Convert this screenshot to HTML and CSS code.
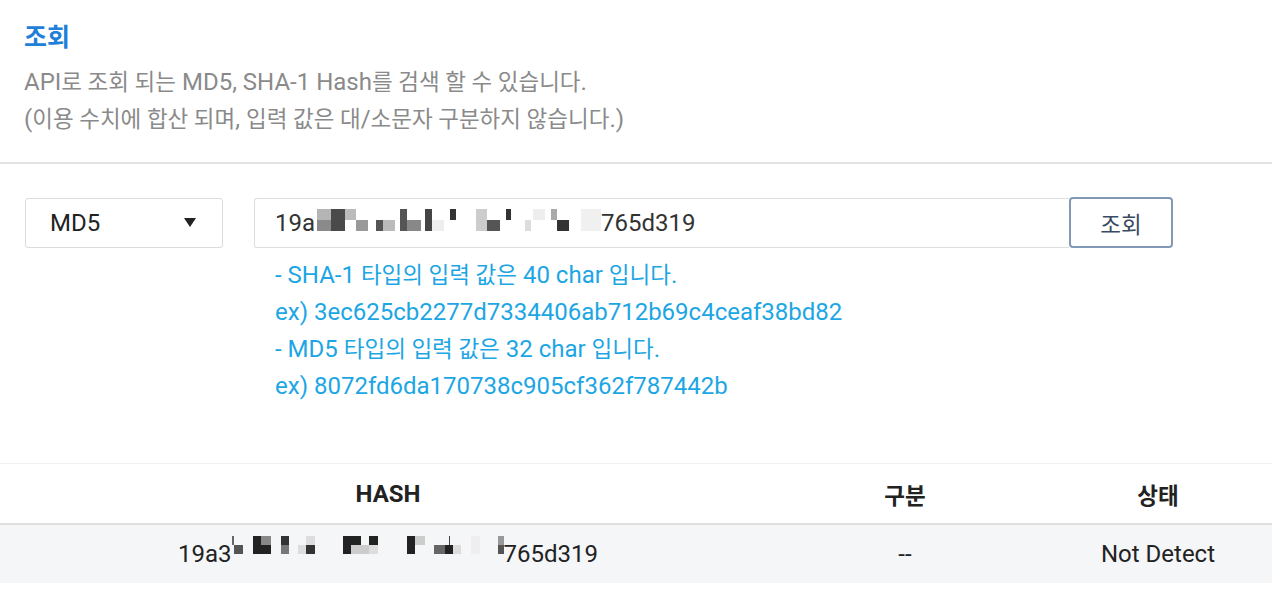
FILE: index.html
```html
<!DOCTYPE html>
<html lang="ko">
<head>
<meta charset="utf-8">
<title>조회</title>
<link rel="stylesheet" href="styles.css">
</head>
<body>
<section class="head">
  <h1 class="title">조회</h1>
  <p class="desc">API<span class="ko">로 조회 되는</span> MD5, SHA-1 Hash<span class="ko">를 검색 할 수 있습니다</span>.<br>(<span class="ko">이용 수치에 합산 되며</span>, <span class="ko">입력 값은 대</span>/<span class="ko">소문자 구분하지 않습니다</span>.)</p>
</section>

<section class="search">
  <div class="row">
    <div class="select"><span>MD5</span><span class="caret"></span></div>
    <div class="input">19a<span class="redact redact-in"></span>765d319</div>
    <button class="btn" type="button">조회</button>
  </div>
  <div class="hints">
    <div>- SHA-1 <span class="ko">타입의 입력 값은</span> 40 char <span class="ko">입니다</span>.</div>
    <div>ex) 3ec625cb2277d7334406ab712b69c4ceaf38bd82</div>
    <div>- MD5 <span class="ko">타입의 입력 값은</span> 32 char <span class="ko">입니다</span>.</div>
    <div>ex) 8072fd6da170738c905cf362f787442b</div>
  </div>
</section>

<section class="table">
  <div class="tr th">
    <div class="c1">HASH</div>
    <div class="c2 ko">구분</div>
    <div class="c3 ko">상태</div>
  </div>
  <div class="tr td">
    <div class="c1">19a3<span class="redact redact-tb"></span>765d319</div>
    <div class="c2">--</div>
    <div class="c3">Not Detect</div>
  </div>
</section>
</body>
</html>
```

FILE: styles.css
```css
* { box-sizing: border-box; }
html, body { margin: 0; padding: 0; background: #fff; }
body {
  font-family: Roboto, "Noto Sans CJK KR", sans-serif;
  color: #222;
  width: 1272px;
  overflow: hidden;
}
.ko { font-size: 22.5px; }

.head {
  padding: 22px 24px 24px;
  border-bottom: 2px solid #e3e3e3;
}
.title {
  margin: 0;
  font-size: 25px;
  line-height: 32px;
  font-weight: 700;
  color: #1f80d8;
}
.desc {
  margin: 10px 0 0;
  font-size: 24px;
  line-height: 37px;
  color: #8a8a8a;
}

.search { padding: 33px 0 0 25px; }
.row { display: flex; align-items: center; }
.select {
  width: 198px;
  height: 50px;
  border: 1px solid #dcdcdc;
  border-radius: 3px;
  display: flex;
  align-items: center;
  justify-content: space-between;
  padding: 0 26px 0 24px;
  font-size: 24px;
  color: #222;
}
.caret {
  width: 0; height: 0;
  border-left: 6.5px solid transparent;
  border-right: 6.5px solid transparent;
  border-top: 9px solid #222;
}
.input {
  margin-left: 31px;
  width: 815px;
  height: 50px;
  border: 1px solid #dedede;
  border-right: none;
  border-radius: 3px 0 0 3px;
  display: flex;
  align-items: center;
  padding-left: 20px;
  font-size: 24px;
  color: #333;
}
.btn {
  width: 104px;
  height: 51px;
  border: 2px solid #8299b6;
  border-radius: 4px;
  background: #fff;
  font-family: "Noto Sans CJK KR", sans-serif;
  font-size: 22.5px;
  color: #3a4a63;
  padding: 0;
}
.hints {
  margin-top: 9px;
  padding-left: 250px;
  font-size: 24px;
  line-height: 37px;
  color: #1ca6e4;
}

.redact { display: inline-block; background-repeat: no-repeat; }
.redact-in {
  width: 286px;
  height: 22px;
  margin-top: -6px;
  background:
    linear-gradient(#b5b5b5,#b5b5b5) 2px 0 / 14px 11px no-repeat,
    linear-gradient(#8a8a8a,#8a8a8a) 2px 11px / 14px 11px no-repeat,
    linear-gradient(#4a4a4a,#4a4a4a) 16px 0 / 14px 22px no-repeat,
    linear-gradient(#bbbbbb,#bbbbbb) 30px 0 / 11px 11px no-repeat,
    linear-gradient(#999999,#999999) 41px 11px / 12px 11px no-repeat,
    linear-gradient(#555555,#555555) 61px 11px / 7px 11px no-repeat,
    linear-gradient(#bbbbbb,#bbbbbb) 68px 11px / 12px 11px no-repeat,
    linear-gradient(#555555,#555555) 85px 0 / 7px 22px no-repeat,
    linear-gradient(#888888,#888888) 92px 11px / 14px 11px no-repeat,
    linear-gradient(#444444,#444444) 110px 0 / 7px 22px no-repeat,
    linear-gradient(#eeeeee,#eeeeee) 117px 11px / 12px 11px no-repeat,
    linear-gradient(#333333,#333333) 135px 0 / 6px 11px no-repeat,
    linear-gradient(#cccccc,#cccccc) 161px 0 / 11px 22px no-repeat,
    linear-gradient(#555555,#555555) 172px 11px / 13px 11px no-repeat,
    linear-gradient(#333333,#333333) 191px 0 / 5px 11px no-repeat,
    linear-gradient(#dddddd,#dddddd) 210px 11px / 6px 11px no-repeat,
    linear-gradient(#eeeeee,#eeeeee) 218px 0 / 12px 11px no-repeat,
    linear-gradient(#aaaaaa,#aaaaaa) 236px 0 / 6px 11px no-repeat,
    linear-gradient(#333333,#333333) 242px 11px / 12px 11px no-repeat,
    linear-gradient(#f0f0f0,#f0f0f0) 266px 0 / 20px 22px no-repeat;
}

.table { margin-top: 58px; }
.tr { display: grid; grid-template-columns: 776px 258px 1fr; align-items: center; text-align: center; }
.th {
  height: 62px;
  border-top: 1px solid #f0f0f0;
  border-bottom: 2px solid #dedede;
  font-weight: 700;
  font-size: 24px;
  color: #222;
}
.td {
  height: 58px;
  background: #f5f6f8;
  font-size: 24px;
  color: #222;
}
.c3 { padding-left: 10px; }
.c1 { display: flex; align-items: center; justify-content: center; }
.redact-tb {
  width: 272px;
  height: 18px;
  margin-top: -19px;
  background:
    linear-gradient(#666666,#666666) 0 0 / 2px 9px no-repeat,
    linear-gradient(#555555,#555555) 2px 9px / 9px 9px no-repeat,
    linear-gradient(#222222,#222222) 21px 0 / 8px 18px no-repeat,
    linear-gradient(#888888,#888888) 29px 0 / 10px 9px no-repeat,
    linear-gradient(#222222,#222222) 29px 9px / 10px 9px no-repeat,
    linear-gradient(#333333,#333333) 49px 0 / 8px 9px no-repeat,
    linear-gradient(#777777,#777777) 49px 9px / 8px 9px no-repeat,
    linear-gradient(#dddddd,#dddddd) 66px 9px / 8px 9px no-repeat,
    linear-gradient(#dddddd,#dddddd) 74px 0 / 9px 9px no-repeat,
    linear-gradient(#333333,#333333) 74px 9px / 9px 9px no-repeat,
    linear-gradient(#222222,#222222) 111px 0 / 18px 9px no-repeat,
    linear-gradient(#222222,#222222) 111px 9px / 8px 9px no-repeat,
    linear-gradient(#cccccc,#cccccc) 119px 9px / 18px 9px no-repeat,
    linear-gradient(#222222,#222222) 137px 0 / 9px 9px no-repeat,
    linear-gradient(#dddddd,#dddddd) 137px 9px / 9px 9px no-repeat,
    linear-gradient(#222222,#222222) 175px 0 / 8px 18px no-repeat,
    linear-gradient(#cccccc,#cccccc) 183px 0 / 10px 9px no-repeat,
    linear-gradient(#666666,#666666) 202px 9px / 11px 9px no-repeat,
    linear-gradient(#222222,#222222) 213px 9px / 8px 9px no-repeat,
    linear-gradient(#444444,#444444) 217px -3px / 1px 12px no-repeat,
    linear-gradient(#dddddd,#dddddd) 221px 9px / 8px 9px no-repeat,
    linear-gradient(#eeeeee,#eeeeee) 239px 0 / 9px 18px no-repeat,
    linear-gradient(#999999,#999999) 266px 0 / 7px 9px no-repeat,
    linear-gradient(#555555,#555555) 266px 9px / 7px 9px no-repeat;
}
```
